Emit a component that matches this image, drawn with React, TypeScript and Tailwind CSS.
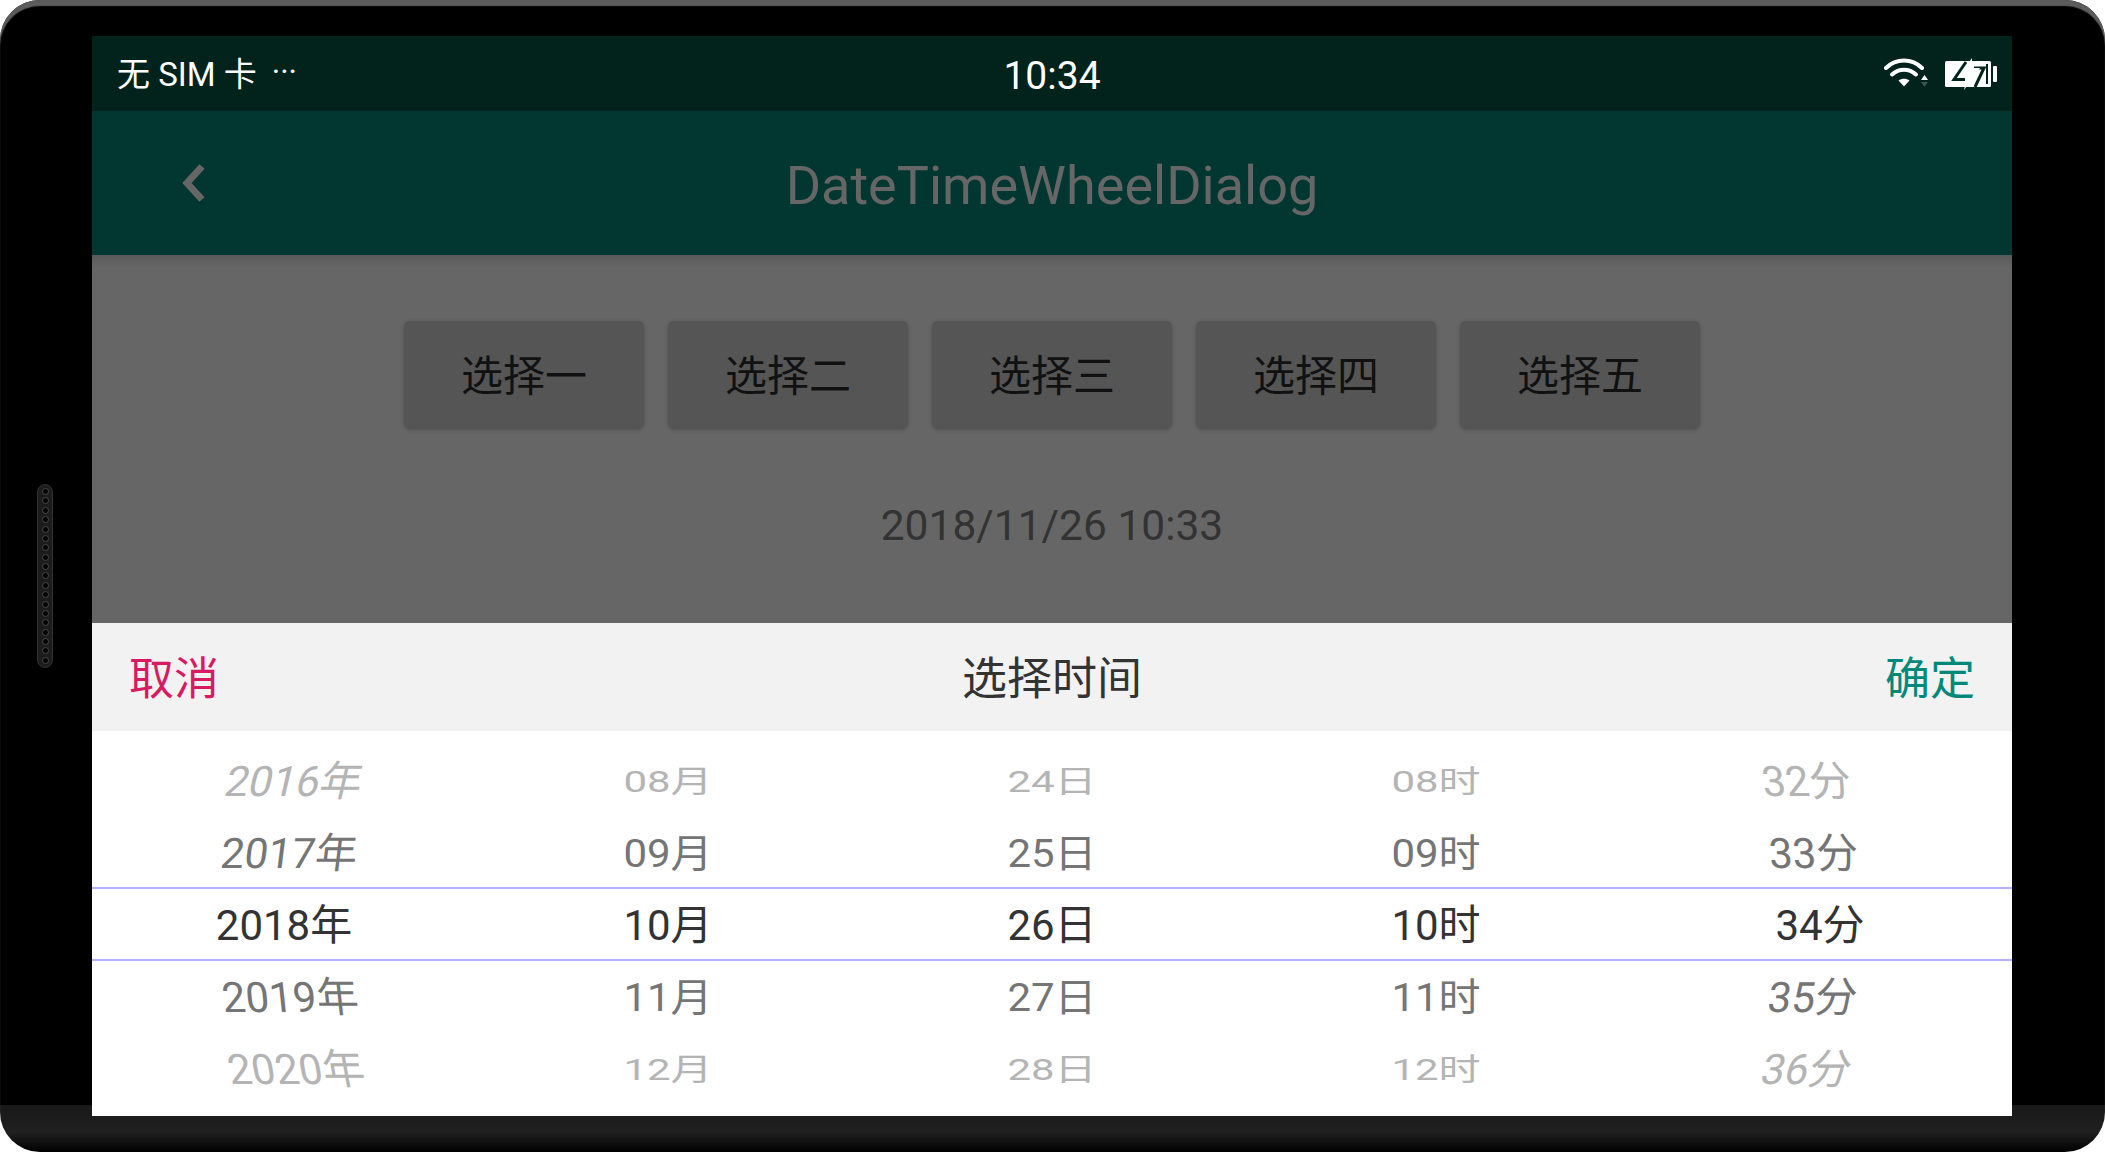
const fontStack = "font-['Roboto','Noto_Sans_CJK_SC',sans-serif]";

const buttons = ["选择一", "选择二", "选择三", "选择四", "选择五"];

const rowTone = ["text-[#b4b4b4]", "text-[#757575]", "text-[#333333]", "text-[#757575]", "text-[#b4b4b4]"];

// flat columns only get squashed towards the wheel edges
const flatRow = ["scale-y-[0.72]", "scale-y-[0.92]", "", "scale-y-[0.92]", "scale-y-[0.72]"];

const columns = [
  {
    items: ["2016年", "2017年", "2018年", "2019年", "2020年"],
    rows: [
      "translate-x-[10px] -skew-x-[13deg]",
      "translate-x-[5px] -skew-x-[7deg]",
      "",
      "translate-x-[6px] skew-x-[6deg]",
      "translate-x-[12px] skew-x-[10deg]",
    ],
  },
  { items: ["08月", "09月", "10月", "11月", "12月"], rows: flatRow },
  { items: ["24日", "25日", "26日", "27日", "28日"], rows: flatRow },
  { items: ["08时", "09时", "10时", "11时", "12时"], rows: flatRow },
  {
    items: ["32分", "33分", "34分", "35分", "36分"],
    rows: [
      "-translate-x-[13px] skew-x-[8deg]",
      "-translate-x-[6px] skew-x-[4deg]",
      "",
      "-translate-x-[7px] -skew-x-[7deg]",
      "-translate-x-[13px] -skew-x-[13deg]",
    ],
  },
];

function SideGrille() {
  return (
    <div className="ml-[37px] flex h-[184px] w-4 flex-col items-center justify-between rounded-full border border-[#333333] bg-[#1c1c1c] py-[3px]">
      {Array.from({ length: 19 }).map((_, i) => (
        <div key={i} className="h-[7px] w-[7px] rounded-full border border-[#4a4a4a] bg-black" />
      ))}
    </div>
  );
}

function WifiIcon() {
  return (
    <svg width="46" height="34" viewBox="0 0 46 34" fill="none">
      <path d="M2 11C12 1 28 1 38 11" stroke="#fff" strokeWidth="4" strokeLinecap="round" />
      <path d="M8 17.5C15 11 25 11 32 17.5" stroke="#fff" strokeWidth="4" strokeLinecap="round" />
      <path d="M14.5 23.5C17.5 21 22.5 21 25.5 23.5L20 29.5Z" fill="#fff" />
      <path d="M37 23L40.5 18L44 23Z" fill="#fff" />
      <path d="M37 25L40.5 30L44 25Z" fill="#3c544f" />
    </svg>
  );
}

function BatteryIcon() {
  return (
    <svg width="52" height="34" viewBox="0 0 52 34" fill="none">
      <rect x="0" y="4" width="46" height="26" rx="1.5" fill="#fff" />
      <rect x="48" y="9" width="4" height="16" rx="1" fill="#fff" />
      <rect x="41" y="7" width="2" height="20" fill="#02221c" />
      <path d="M21 5L9 22.5H20" stroke="#02221c" strokeWidth="3" />
      <path d="M29 11H39L30 30" stroke="#02221c" strokeWidth="3" />
      <path d="M27 1L14 20H22L19 33L35 11H27Z" fill="#fff" />
    </svg>
  );
}

function StatusBar() {
  return (
    <div className="relative flex h-[75px] items-center justify-between bg-[#02221c] pl-[25px] pr-[15px] text-white">
      <div className="flex items-center pt-[2px] text-[33px] leading-none">
        <span>无 SIM 卡</span>
        <span className="ml-[15px] -translate-y-[3px] text-[32px] leading-none">···</span>
      </div>
      <span className="absolute left-0 right-0 pt-[5px] text-center text-[39px] leading-none">10:34</span>
      <div className="flex items-center gap-[15px]">
        <WifiIcon />
        <BatteryIcon />
      </div>
    </div>
  );
}

function Toolbar() {
  return (
    <div className="relative flex h-[144px] items-center justify-center bg-[#013730]">
      <svg className="absolute left-[90px] top-[53px]" width="24" height="38" viewBox="0 0 24 38" fill="none">
        <path d="M20 2.5L5 19L20 35.5" stroke="#666666" strokeWidth="7" />
      </svg>
      <span className="pt-[6px] text-[54px] leading-none text-[#666666]">DateTimeWheelDialog</span>
    </div>
  );
}

function WheelColumn({ items, rows }: { items: string[]; rows: string[] }) {
  return (
    <div className="flex flex-col">
      {items.map((item, i) => (
        <div key={item} className="flex h-[72px] items-center justify-center pt-[3px]">
          <span className={`block text-[42px] leading-none ${rowTone[i]} ${rows[i]}`}>{item}</span>
        </div>
      ))}
    </div>
  );
}

function PickerSheet() {
  return (
    <div className="flex flex-col">
      <div className="flex h-[108px] items-center justify-between bg-[#f2f2f2] px-[37px] pt-[4px] text-[45px] leading-none">
        <span className="text-[#d81b60]">取消</span>
        <span className="text-[#333333]">选择时间</span>
        <span className="text-[#00897b]">确定</span>
      </div>
      <div className="relative grid grid-cols-5 bg-white pb-[12px] pt-[13px]">
        {columns.map((col) => (
          <WheelColumn key={col.items[0]} items={col.items} rows={col.rows} />
        ))}
        <div className="absolute left-0 right-0 top-[156px] h-[74px] border-y-2 border-[#b3b3fb]" />
      </div>
    </div>
  );
}

export default function App() {
  return (
    <div className={`h-[1152px] w-[2105px] bg-white ${fontStack}`}>
      <div className="flex h-full flex-col overflow-hidden rounded-[40px] bg-[linear-gradient(to_bottom,#000_1105px,#181818_1105px,#202020_1132px,#000_1152px)] pt-[36px] shadow-[inset_0_6px_1px_#5c5c5c]">
        <div className="flex h-[1080px]">
          <div className="flex w-[92px] items-center">
            <SideGrille />
          </div>
          <div className="flex w-[1920px] flex-col bg-[#666666]">
            <StatusBar />
            <Toolbar />
            <div className="flex flex-1 flex-col items-center bg-[linear-gradient(to_bottom,#5a5a5a,#666666_12px)] pt-[66px]">
              <div className="flex gap-[24px]">
                {buttons.map((label) => (
                  <div
                    key={label}
                    className="flex h-[108px] w-[240px] items-center justify-center rounded-[6px] bg-[#555555] pt-[4px] text-[42px] leading-none text-[#111111] shadow-[0_1px_4px_rgba(0,0,0,0.2)]"
                  >
                    {label}
                  </div>
                ))}
              </div>
              <div className="mt-[76px] text-[42.5px] leading-none text-[#333333]">2018/11/26 10:33</div>
            </div>
            <PickerSheet />
          </div>
        </div>
      </div>
    </div>
  );
}
